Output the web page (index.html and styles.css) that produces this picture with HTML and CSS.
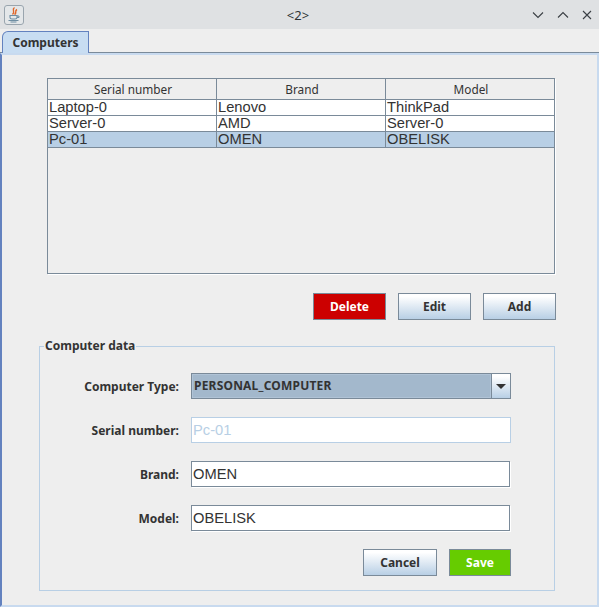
FILE: index.html
```html
<!DOCTYPE html>
<html lang="en">
<head>
    <meta charset="UTF-8">
    <meta name="viewport" content="width=device-width, initial-scale=1.0">
    <title>&lt;2&gt;</title>
    <link rel="stylesheet" href="styles.css">
</head>
<body>

    <div class="titlebar">
        <div class="app-icon">
            <svg width="20" height="20" viewBox="0 0 20 20">
                <rect x="0.5" y="0.5" width="19" height="19" rx="2.5" fill="#e4e7e9" stroke="#9aa5ae"/>
                <path d="M10.5 2.5 C7 5 12 6.5 8.5 9.5 M13 4.5 C10 6 13.5 8 10.5 9.5" fill="none" stroke="#e0662a" stroke-width="1.4"/>
                <path d="M6 10.5 H13 V12.5 C13 13.5 12 14 11 14 H8 C7 14 6 13.5 6 12.5 Z" fill="none" stroke="#6f8ea3" stroke-width="1.1"/>
                <path d="M13 11 H15 V12.5 H13" fill="none" stroke="#6f8ea3"/>
                <path d="M4.5 15.5 H14.5 M6.5 17 H12.5" stroke="#6f8ea3" stroke-width="1"/>
            </svg>
        </div>
        <div class="window-title">&lt;2&gt;</div>
        <div class="window-controls">
            <svg width="12" height="8" viewBox="0 0 12 8"><path d="M1 1.5 L6 6.5 L11 1.5" class="ctl"/></svg>
            <svg width="12" height="8" viewBox="0 0 12 8"><path d="M1 6.5 L6 1.5 L11 6.5" class="ctl"/></svg>
            <svg width="10" height="10" viewBox="0 0 10 10"><path d="M1 1 L9 9 M9 1 L1 9" class="ctl"/></svg>
        </div>
    </div>

    <div class="tabstrip">
        <div class="tab">Computers</div>
    </div>

    <div class="panel">
        <div class="table-pane">
            <table class="data-table">
                <thead>
                    <tr><th>Serial number</th><th>Brand</th><th>Model</th></tr>
                </thead>
                <tbody>
                    <tr><td>Laptop-0</td><td>Lenovo</td><td>ThinkPad</td></tr>
                    <tr><td>Server-0</td><td>AMD</td><td>Server-0</td></tr>
                    <tr class="selected"><td>Pc-01</td><td>OMEN</td><td>OBELISK</td></tr>
                </tbody>
            </table>
        </div>

        <div class="actions">
            <button class="btn btn-delete">Delete</button>
            <button class="btn">Edit</button>
            <button class="btn">Add</button>
        </div>

        <fieldset class="form-box">
            <legend>Computer data</legend>
            <div class="form-grid">
                <label>Computer Type:</label>
                <div class="combo">
                    <div class="combo-value">PERSONAL_COMPUTER</div>
                    <div class="combo-arrow"></div>
                </div>

                <label>Serial number:</label>
                <input class="field field-disabled" type="text" value="Pc-01" disabled>

                <label>Brand:</label>
                <input class="field" type="text" value="OMEN">

                <label>Model:</label>
                <input class="field" type="text" value="OBELISK">

                <div class="form-buttons">
                    <button class="btn btn-cancel">Cancel</button>
                    <button class="btn btn-save">Save</button>
                </div>
            </div>
        </fieldset>
    </div>

</body>
</html>
```

FILE: styles.css
```css
* {
    box-sizing: border-box;
}
body {
    margin: 0;
    width: 599px;
    height: 607px;
    overflow: hidden;
    background-color: #eeeeee;
    color: #333333;
    font-family: "Noto Sans", sans-serif;
    font-size: 12px;
}

.titlebar {
    display: grid;
    grid-template-columns: 1fr auto 1fr;
    align-items: center;
    height: 29px;
    padding: 0 7px 0 4px;
    background-color: #dfe1e3;
}
.app-icon {
    display: flex;
}
.window-title {
    font-size: 13px;
    color: #2e3436;
}
.window-controls {
    display: flex;
    justify-content: flex-end;
    align-items: center;
    gap: 13px;
}
.ctl {
    fill: none;
    stroke: #3a3f44;
    stroke-width: 1.1;
}

.tabstrip {
    height: 24px;
    padding: 2px 0 0 2px;
    border-bottom: 1px solid #7a8a99;
}
.tab {
    width: 87px;
    height: 22px;
    padding-top: 2px;
    text-align: center;
    font-weight: bold;
    background-color: #c8ddf2;
    border: 1px solid #6382bf;
    border-bottom: none;
    border-top-left-radius: 6px;
}

.panel {
    height: 554px;
    padding: 23px 0 0 37px;
    border: 2px solid #c8daef;
    border-left-color: #6382bf;
}
.table-pane {
    width: 508px;
    height: 196px;
    margin-left: 8px;
    border: 1px solid #7a8a99;
    box-shadow: 1px 1px 0 #ffffff;
}
.data-table {
    width: 507px;
    table-layout: fixed;
    border-collapse: separate;
    border-spacing: 0;
    font-family: "Liberation Sans", Arial, sans-serif;
    font-size: 14.7px;
}
.data-table th {
    height: 21px;
    padding: 0 0 0 2px;
    font-family: "Noto Sans", sans-serif;
    font-size: 11.8px;
    font-weight: normal;
    background-color: #eeeeee;
    border-right: 1px solid #7a8a99;
    border-bottom: 1px solid #7a8a99;
}
.data-table td {
    height: 16px;
    padding: 0 0 1px 1px;
    line-height: 14px;
    background-color: #ffffff;
    border-right: 1px solid #7a8a99;
    border-bottom: 1px solid #7a8a99;
}
.data-table .selected td {
    background-color: #b8cfe5;
}

.actions {
    display: flex;
    justify-content: flex-end;
    gap: 12px;
    width: 517px;
    margin-top: 19px;
}
.btn {
    width: 73px;
    height: 27px;
    padding: 0;
    font-family: "Noto Sans", sans-serif;
    font-size: 12px;
    font-weight: bold;
    color: #333333;
    border: 1px solid #7a8a99;
    background: linear-gradient(#ffffff 10%, #b8cfe5);
}
.btn-delete {
    color: #ffffff;
    background: #cc0000;
}
.btn-cancel {
    width: 74px;
}
.btn-save {
    width: 62px;
    color: #ffffff;
    background: #66cc00;
}

.form-box {
    width: 516px;
    height: 252px;
    margin: 19px 0 0;
    padding: 20px 0 0;
    border: 1px solid #b8cfe5;
}
.form-box legend {
    margin-left: 4px;
    padding: 0 1px;
    line-height: 14px;
    font-weight: bold;
}
.form-grid {
    display: grid;
    grid-template-columns: 139px 320px;
    grid-auto-rows: 26px;
    column-gap: 12px;
    row-gap: 18px;
    align-items: center;
}
.form-grid label {
    text-align: right;
    font-weight: bold;
}

.combo {
    display: flex;
    height: 26px;
    border: 1px solid #7a8a99;
    background-color: #a3b8cc;
}
.combo-value {
    flex: 1;
    padding-left: 1px;
    line-height: 21px;
    font-weight: bold;
    letter-spacing: 0.2px;
    border: 1px solid #b0c3d6;
}
.combo-arrow {
    position: relative;
    width: 19px;
    border-left: 1px solid #7a8a99;
    background: linear-gradient(#ffffff 10%, #b8cfe5);
}
.combo-arrow::after {
    content: "";
    position: absolute;
    left: 4px;
    top: 10px;
    border-left: 5px solid transparent;
    border-right: 5px solid transparent;
    border-top: 5px solid #333333;
}

.field {
    width: 319px;
    height: 26px;
    padding: 0 0 1px 1px;
    font-family: "Liberation Sans", Arial, sans-serif;
    font-size: 14.7px;
    color: #333333;
    background-color: #ffffff;
    border: 1px solid #7a8a99;
    border-radius: 0;
    outline: none;
    box-shadow: 1px 1px 0 #ffffff;
}
.field-disabled {
    width: 320px;
    color: #b8cfe5;
    border-color: #b8cfe5;
    box-shadow: none;
}

.form-buttons {
    grid-column: 2;
    display: flex;
    justify-content: flex-end;
    gap: 12px;
    height: 27px;
}
```
